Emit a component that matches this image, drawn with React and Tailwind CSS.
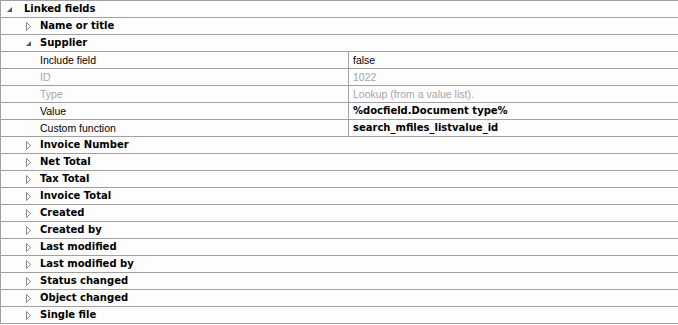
import React from "react";

const rows = [
  { kind: "group", level: 0, label: "Linked fields", open: true },
  { kind: "group", level: 1, label: "Name or title" },
  { kind: "group", level: 1, label: "Supplier", open: true },
  { kind: "prop", label: "Include field", value: "false" },
  { kind: "prop", label: "ID", value: "1022", disabled: true },
  { kind: "prop", label: "Type", value: "Lookup (from a value list).", disabled: true },
  { kind: "prop", label: "Value", value: "%docfield.Document type%", bold: true },
  { kind: "prop", label: "Custom function", value: "search_mfiles_listvalue_id", bold: true },
  { kind: "group", level: 1, label: "Invoice Number" },
  { kind: "group", level: 1, label: "Net Total" },
  { kind: "group", level: 1, label: "Tax Total" },
  { kind: "group", level: 1, label: "Invoice Total" },
  { kind: "group", level: 1, label: "Created" },
  { kind: "group", level: 1, label: "Created by" },
  { kind: "group", level: 1, label: "Last modified" },
  { kind: "group", level: 1, label: "Last modified by" },
  { kind: "group", level: 1, label: "Status changed" },
  { kind: "group", level: 1, label: "Object changed" },
  { kind: "group", level: 1, label: "Single file" },
];

// little tree arrows, like the windows property grid
function Expander({ open }) {
  if (open) {
    return (
      <svg width="7" height="9" viewBox="0 0 7 9" className="block">
        <path d="M6 2 L6 7 L1 7 Z" fill="#5a5a5a" />
      </svg>
    );
  }
  return (
    <svg width="7" height="9" viewBox="0 0 7 9" className="block">
      <path d="M1.5 0.5 L5.5 4.5 L1.5 8.5 Z" fill="none" stroke="#8c8c8c" strokeWidth="1" />
    </svg>
  );
}

const bold = "font-['DejaVu_Sans',sans-serif] font-bold text-[10px]";
const regular = "font-['Liberation_Sans',Arial,sans-serif] text-[10.5px]";

function Row({ row }) {
  if (row.kind === "group") {
    return (
      <div className="flex h-[17px] items-center border-t border-[#a0a0a0]">
        {row.level === 0 ? (
          <div className="flex w-[23px] shrink-0 pl-[5px]">
            <Expander open={row.open} />
          </div>
        ) : (
          <div className="flex w-[39px] shrink-0 pl-[24px]">
            <Expander open={row.open} />
          </div>
        )}
        <span className={`${bold} leading-[16px] text-black whitespace-nowrap`}>{row.label}</span>
      </div>
    );
  }

  const tone = row.disabled ? "text-[#a6a6a6]" : "text-black";
  return (
    <div className="flex h-[17px] border-t border-[#a0a0a0]">
      <div className={`w-[347px] shrink-0 pl-[39px] ${regular} leading-[16px] ${tone} whitespace-nowrap`}>
        {row.label}
      </div>
      <div
        className={`flex-1 border-l border-[#a0a0a0] pl-[4px] leading-[16px] ${tone} whitespace-nowrap ${
          row.bold ? bold : regular
        }`}
      >
        {row.value}
      </div>
    </div>
  );
}

export default function App() {
  return (
    <div className="h-[325px] w-[678px] bg-[#fdfdfd] overflow-hidden">
      <div className="border-l border-b border-[#a0a0a0]">
        {rows.map((row, i) => (
          <Row key={i} row={row} />
        ))}
      </div>
    </div>
  );
}
